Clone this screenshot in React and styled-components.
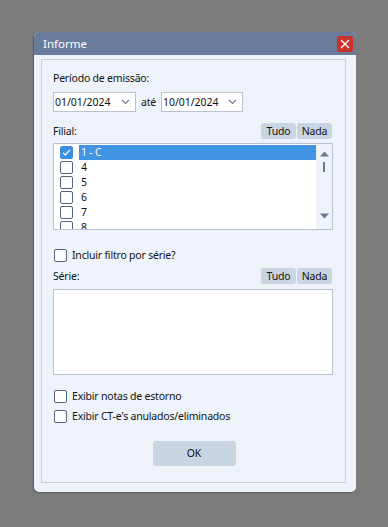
import React from 'react';
import styled, { createGlobalStyle } from 'styled-components';

const GlobalStyle = createGlobalStyle`
  html, body {
    margin: 0;
    padding: 0;
    background: #7b7b7b;
    height: 100%;
  }
  body {
    font-family: "Noto Sans", "Open Sans", sans-serif;
    font-size: 10.5px;
    letter-spacing: -0.2px;
    color: #111;
  }
`;

const Screen = styled.div`
  padding: 32px 0 0 34px;
`;

const Dialog = styled.div`
  width: 322px;
  height: 460px;
  background: #eef3fa;
  border-radius: 5px;
  overflow: hidden;
  box-shadow: -1px 1px 1px rgba(0, 0, 0, 0.25);
  display: flex;
  flex-direction: column;
`;

const TitleBar = styled.div`
  height: 23px;
  background: #6a7b9b;
  display: flex;
  align-items: center;
  justify-content: space-between;
  padding: 0 3px 0 9px;
  color: #fff;
  font-size: 11.5px;
  letter-spacing: 0;
`;

const CloseButton = styled.div`
  width: 16px;
  height: 16px;
  margin-top: 1px;
  background: #c8322a;
  border-radius: 2px;
  display: flex;
  align-items: center;
  justify-content: center;
`;

const Panel = styled.div`
  margin: 4px 10px 0 7px;
  height: 412px;
  border: 1px solid #c8d0db;
  padding: 10px 12px 0 11px;
  display: flex;
  flex-direction: column;
`;

const Label = styled.div`
  line-height: 16px;
  height: 16px;
`;

const DateRow = styled.div`
  display: flex;
  align-items: center;
  margin-top: 6px;
  height: 20px;
`;

const Combo = styled.div`
  width: ${(p) => p.$w}px;
  height: 20px;
  box-sizing: border-box;
  background: #fff;
  border: 1px solid #b9c2ce;
  display: flex;
  align-items: center;
  justify-content: space-between;
  padding: 0 5px 0 1px;
  letter-spacing: -0.05px;
`;

const Until = styled.span`
  width: 25px;
  padding-left: 5px;
  box-sizing: border-box;
`;

const HeaderRow = styled.div`
  display: flex;
  align-items: center;
  justify-content: space-between;
  height: 16px;
  margin-top: ${(p) => p.$top}px;
  margin-right: 1px;
`;

const ButtonGroup = styled.div`
  display: flex;
  gap: 1px;
`;

const SmallButton = styled.div`
  width: 35px;
  height: 16px;
  line-height: 16px;
  text-align: center;
  background: #c9d5e2;
  border-radius: 3px;
`;

const ListBox = styled.div`
  margin-top: 4px;
  height: 87px;
  box-sizing: border-box;
  border: 1px solid #b9c2ce;
  background: #fff;
  display: flex;
  overflow: hidden;
`;

const Rows = styled.div`
  flex: 1;
  padding: 1px 0 0 6px;
`;

const Row = styled.div`
  height: 15px;
  display: flex;
  align-items: center;
`;

const RowText = styled.div`
  flex: 1;
  height: 15px;
  line-height: 15px;
  margin-left: 6px;
  padding-left: 2px;
  background: ${(p) => (p.$selected ? '#4193e3' : 'transparent')};
  color: ${(p) => (p.$selected ? '#fff' : '#111')};
`;

const ScrollBar = styled.div`
  width: 16px;
  background: #eef3fa;
  display: flex;
  flex-direction: column;
  align-items: center;
  padding-top: 7px;
`;

const Thumb = styled.div`
  width: 2px;
  height: 10px;
  margin-top: 5px;
  background: #6b7a94;
  flex: none;
`;

const ArrowDown = styled.div`
  margin-top: auto;
  margin-bottom: 7px;
`;

const Box = styled.div`
  width: 13px;
  height: 13px;
  box-sizing: border-box;
  border: 1px solid ${(p) => (p.$checked ? '#3c8ee0' : '#55647e')};
  background: ${(p) => (p.$checked ? '#3c8ee0' : '#fff')};
  border-radius: 2px;
  flex: none;
  display: flex;
  align-items: center;
  justify-content: center;
`;

const CheckRow = styled.label`
  display: flex;
  align-items: center;
  height: 16px;
  margin-top: ${(p) => p.$top}px;
  gap: 5px;
  margin-left: 1px;
`;

const TextArea = styled.div`
  margin-top: 5px;
  height: 86px;
  box-sizing: border-box;
  border: 1px solid #b9c2ce;
  background: #fff;
`;

const OkButton = styled.div`
  align-self: center;
  margin-top: 17px;
  width: 83px;
  height: 25px;
  line-height: 25px;
  text-align: center;
  background: #c9d5e2;
  border-radius: 3px;
  margin-left: 2px;
`;

const Chevron = () => (
  <svg width="9" height="6" viewBox="0 0 9 6">
    <path d="M1 1 L4.5 4.5 L8 1" fill="none" stroke="#6b7a94" strokeWidth="1.1" />
  </svg>
);

const Triangle = ({ up }) => (
  <svg width="9" height="6" viewBox="0 0 9 6">
    <path d={up ? 'M0 5.5 L4.5 0.5 L9 5.5 Z' : 'M0 0.5 L4.5 5.5 L9 0.5 Z'} fill="#6b7a94" />
  </svg>
);

const Check = ({ checked }) => (
  <Box $checked={checked}>
    {checked && (
      <svg width="11" height="11" viewBox="0 0 11 11">
        <path d="M2 5.8 L4.3 8 L9 2.8" fill="none" stroke="#fff" strokeWidth="1.2" />
      </svg>
    )}
  </Box>
);

const branches = [
  { id: '1 - C', checked: true, selected: true },
  { id: '4' },
  { id: '5' },
  { id: '6' },
  { id: '7' },
  { id: '8' },
];

const App = () => (
  <>
    <GlobalStyle />
    <Screen>
      <Dialog>
        <TitleBar>
          <span>Informe</span>
          <CloseButton>
            <svg width="10" height="10" viewBox="0 0 10 10">
              <path d="M1 1 L9 9 M9 1 L1 9" stroke="#fff" strokeWidth="1.3" />
            </svg>
          </CloseButton>
        </TitleBar>
        <Panel>
          <Label>Período de emissão:</Label>
          <DateRow>
            <Combo $w={83}>
              <span>01/01/2024</span>
              <Chevron />
            </Combo>
            <Until>até</Until>
            <Combo $w={82}>
              <span>10/01/2024</span>
              <Chevron />
            </Combo>
          </DateRow>
          <HeaderRow $top={11}>
            <span>Filial:</span>
            <ButtonGroup>
              <SmallButton>Tudo</SmallButton>
              <SmallButton>Nada</SmallButton>
            </ButtonGroup>
          </HeaderRow>
          <ListBox>
            <Rows>
              {branches.map((b) => (
                <Row key={b.id}>
                  <Check checked={b.checked} />
                  <RowText $selected={b.selected}>{b.id}</RowText>
                </Row>
              ))}
            </Rows>
            <ScrollBar>
              <Triangle up />
              <Thumb />
              <ArrowDown>
                <Triangle />
              </ArrowDown>
            </ScrollBar>
          </ListBox>
          <CheckRow $top={17}>
            <Check />
            <span>Incluir filtro por série?</span>
          </CheckRow>
          <HeaderRow $top={5}>
            <span>Série:</span>
            <ButtonGroup>
              <SmallButton>Tudo</SmallButton>
              <SmallButton>Nada</SmallButton>
            </ButtonGroup>
          </HeaderRow>
          <TextArea />
          <CheckRow $top={13}>
            <Check />
            <span>Exibir notas de estorno</span>
          </CheckRow>
          <CheckRow $top={4}>
            <Check />
            <span>Exibir CT-e's anulados/eliminados</span>
          </CheckRow>
          <OkButton>OK</OkButton>
        </Panel>
      </Dialog>
    </Screen>
  </>
);

export default App;
